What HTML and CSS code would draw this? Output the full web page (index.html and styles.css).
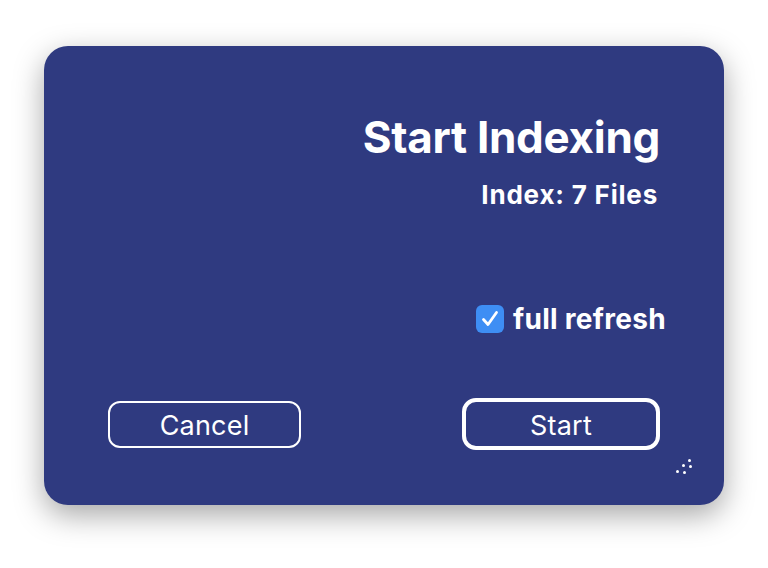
FILE: index.html
```html
<!DOCTYPE html>
<html>
<head>
<meta charset="utf-8">
<link rel="stylesheet" href="styles.css">
</head>
<body>
<div class="dialog">
  <div class="header">
    <h1 class="title">Start Indexing</h1>
    <div class="subtitle">Index: 7 Files</div>
  </div>
  <label class="option">
    <span class="checkbox"><svg viewBox="0 0 28 28" width="28" height="28"><path d="M7.5 14.5 L12 19.5 L20.5 7.5" fill="none" stroke="#fff" stroke-width="2.8" stroke-linecap="round" stroke-linejoin="round"/></svg></span>
    <span class="option-label">full refresh</span>
  </label>
  <div class="actions">
    <button class="btn btn-cancel">Cancel</button>
    <button class="btn btn-start">Start</button>
  </div>
  <span class="grip"><i class="d1"></i><i class="d2"></i><i class="d3"></i><i class="d4"></i><i class="d5"></i></span>
</div>
</body>
</html>
```
FILE: styles.css
```css
html, body {
  margin: 0;
  padding: 0;
  background: #ffffff;
}
body {
  width: 768px;
  height: 568px;
  font-family: Inter, "Noto Sans", sans-serif;
  color: #ffffff;
}
.dialog {
  position: relative;
  box-sizing: border-box;
  margin: 46px 0 0 44px;
  width: 680px;
  height: 459px;
  background: #2f3a80;
  border-radius: 24px;
  box-shadow: 0 10px 30px rgba(0, 0, 0, 0.35);
  padding: 66px 64px 55px 64px;
  display: flex;
  flex-direction: column;
}
.header {
  display: flex;
  flex-direction: column;
  align-items: flex-end;
}
.title {
  margin: 0;
  font-size: 44px;
  font-weight: 700;
  line-height: 50px;
  letter-spacing: -0.3px;
}
.subtitle {
  margin-top: 18px;
  margin-right: 2px;
  font-size: 26px;
  font-weight: 700;
  line-height: 30px;
  letter-spacing: 0.8px;
}
.option {
  margin-top: 93px;
  align-self: flex-end;
  margin-right: -6px;
  display: flex;
  align-items: center;
  gap: 9px;
}
.checkbox {
  width: 28px;
  height: 28px;
  border-radius: 6px;
  background: #3e8ef4;
  display: block;
}
.checkbox svg { display: block; }
.option-label {
  font-size: 28px;
  font-weight: 700;
  line-height: 32px;
  letter-spacing: 0.3px;
}
.actions {
  margin-top: auto;
  display: flex;
  justify-content: space-between;
  align-items: center;
}
.btn {
  font-family: Inter, "Noto Sans", sans-serif;
  color: #ffffff;
  background: transparent;
  font-size: 27px;
  font-weight: 400;
  box-sizing: border-box;
  padding: 3px 0 0 0;
  letter-spacing: 0.2px;
}
.btn-cancel {
  width: 193px;
  height: 47px;
  border: 2px solid #ffffff;
  border-radius: 12px;
}
.btn-start {
  width: 198px;
  height: 52px;
  border: 4px solid #ffffff;
  border-radius: 14px;
}
.grip {
  position: absolute;
  right: 30px;
  bottom: 30px;
  width: 18px;
  height: 16px;
}
.grip i {
  position: absolute;
  width: 3px;
  height: 3px;
  border-radius: 50%;
  background: #ffffff;
}
.grip .d1 { left: 0; top: 11px; }
.grip .d2 { left: 6px; top: 5px; }
.grip .d3 { left: 12px; top: 0; }
.grip .d4 { left: 7px; top: 12px; }
.grip .d5 { left: 13px; top: 6px; }
```
